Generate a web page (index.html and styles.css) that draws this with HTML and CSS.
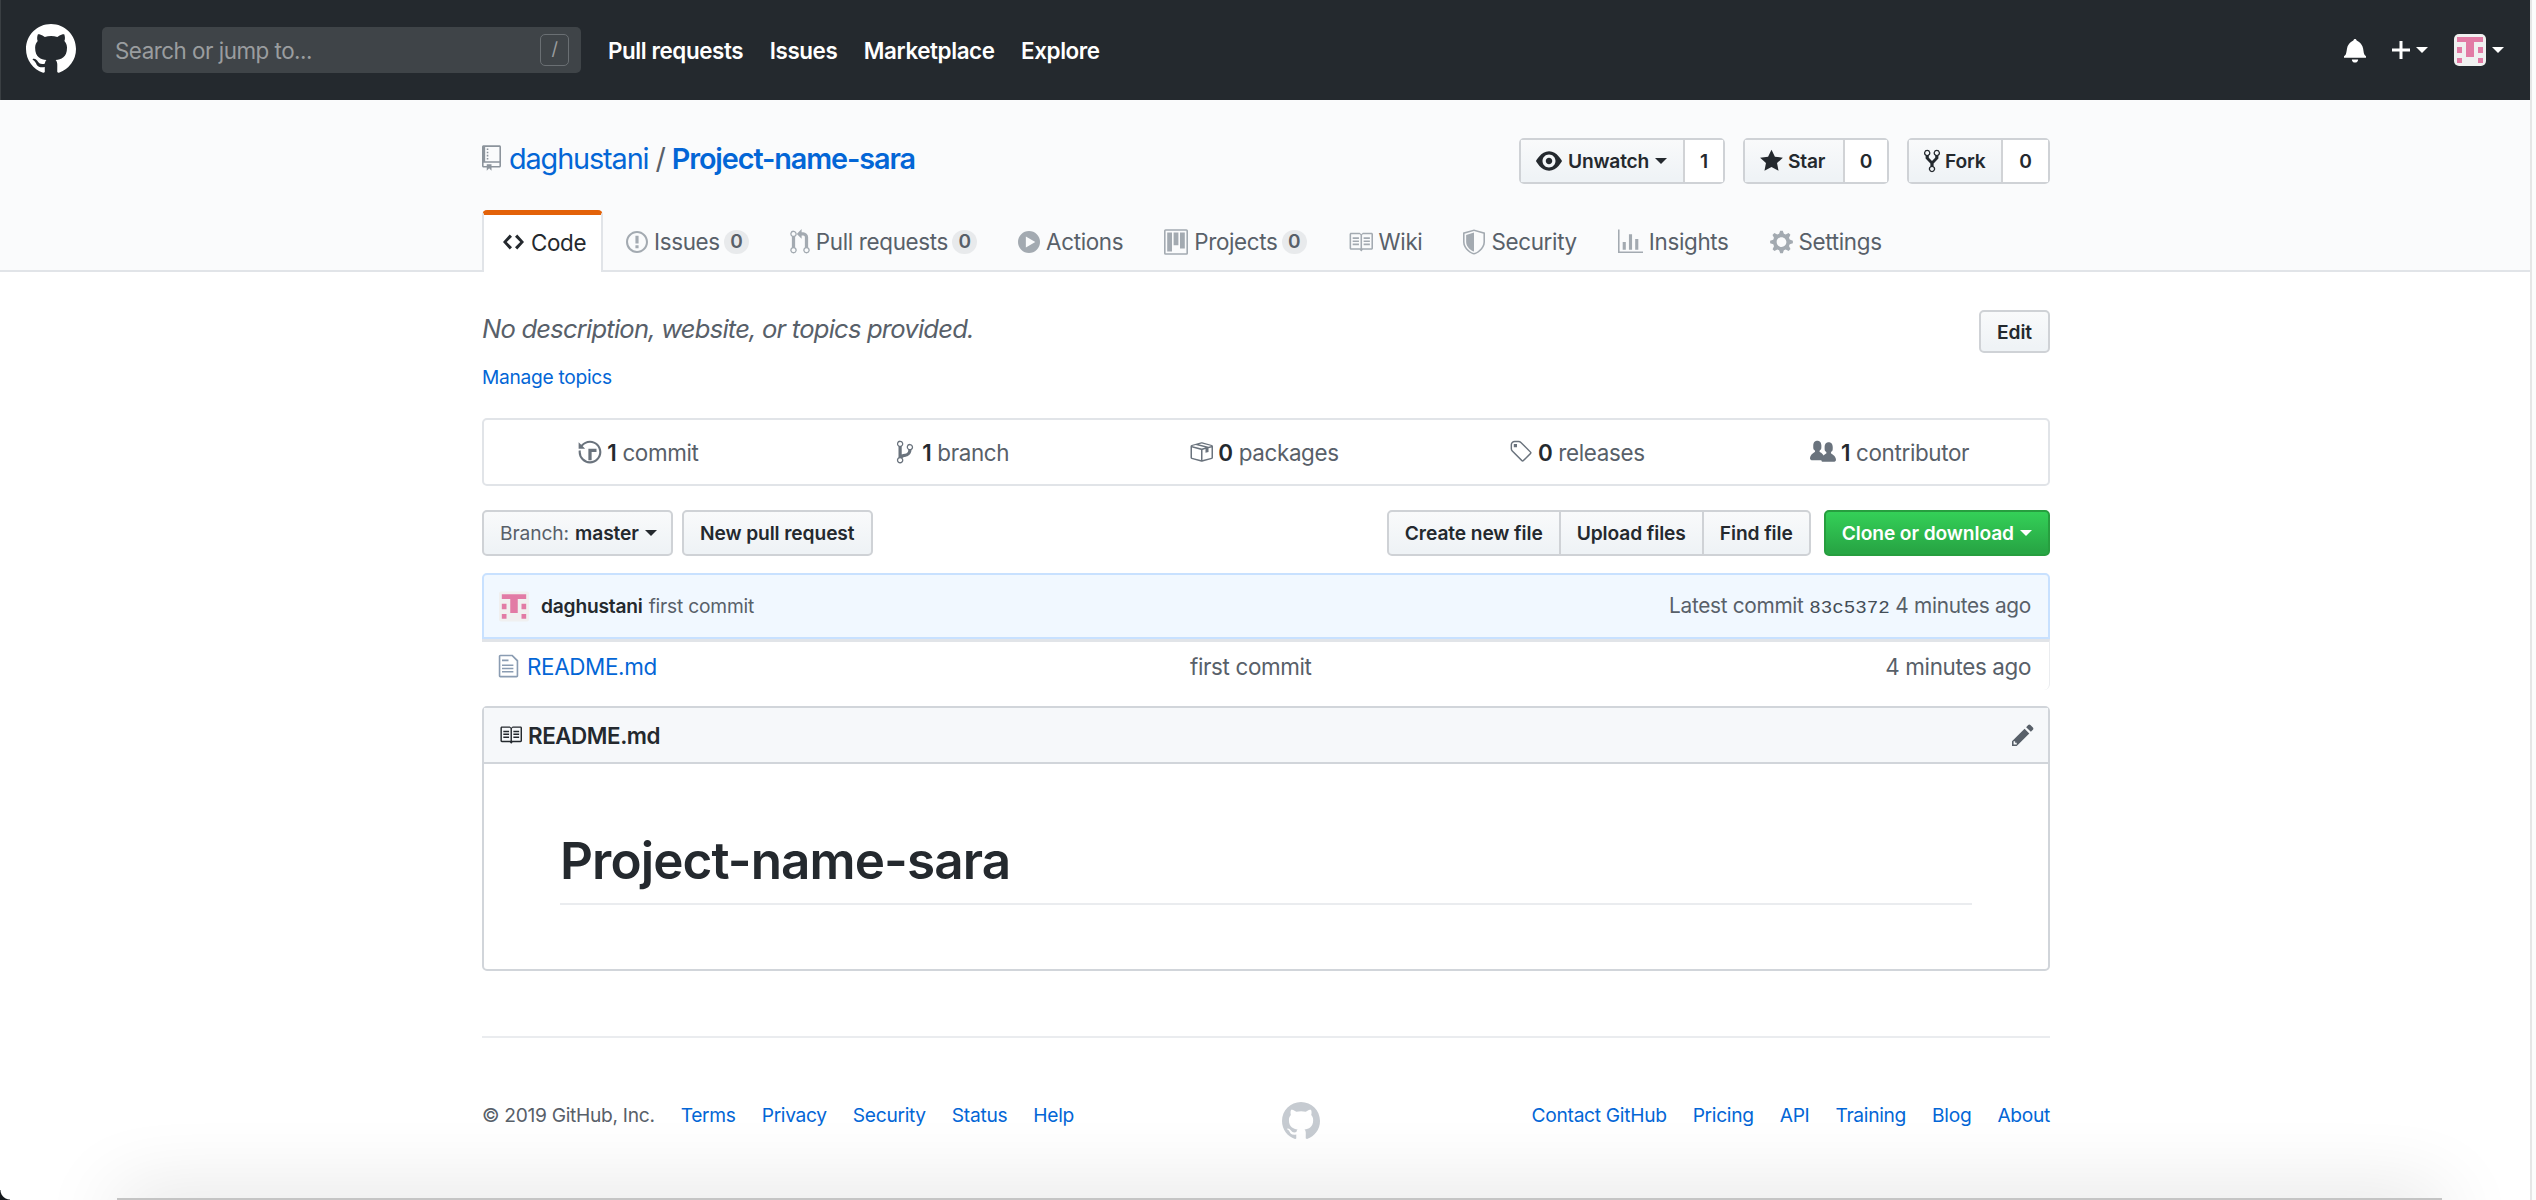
FILE: index.html
```html
<!doctype html>
<html>
<head>
	<meta charset="utf-8">
	<title>daghustani/Project-name-sara</title>
	<link rel="stylesheet" href="styles.css">
</head>
<body>
	<svg class="defs" width="0" height="0">
		<symbol id="mark" viewBox="0 0 16 16"><path fill-rule="evenodd" d="M8 0C3.58 0 0 3.58 0 8c0 3.54 2.29 6.53 5.47 7.59.4.07.55-.17.55-.38 0-.19-.01-.82-.01-1.49-2.01.37-2.53-.49-2.69-.94-.09-.23-.48-.94-.82-1.13-.28-.15-.68-.52-.01-.53.63-.01 1.08.58 1.23.82.72 1.21 1.87.87 2.33.66.07-.52.28-.87.51-1.07-1.78-.2-3.64-.89-3.64-3.95 0-.87.31-1.59.82-2.15-.08-.2-.36-1.02.08-2.12 0 0 .67-.21 2.2.82.64-.18 1.32-.27 2-.27.68 0 1.36.09 2 .27 1.53-1.04 2.2-.82 2.2-.82.44 1.1.16 1.92.08 2.12.51.56.82 1.27.82 2.15 0 3.07-1.87 3.75-3.65 3.95.29.25.54.73.54 1.48 0 1.07-.01 1.93-.01 2.2 0 .21.15.46.55.38A8.013 8.013 0 0 0 16 8c0-4.42-3.58-8-8-8z"/></symbol>
		<symbol id="avatar" viewBox="0 0 32 32"><rect width="32" height="32" fill="#f0f0f0"/><path fill="#e27ba5" d="M3 3h26v5H3zM12 8h8v15h-8zM3 13h5v6H3zM24 13h5v6h-5zM3 24h5v5H3zM24 24h5v5h-5z"/></symbol>
	</svg>

	<header class="topbar">
		<svg class="logo"><use href="#mark"/></svg>
		<div class="search">
			<span>Search or jump to...</span>
			<span class="slash">/</span>
		</div>
		<nav class="topnav">
			<a>Pull requests</a>
			<a>Issues</a>
			<a>Marketplace</a>
			<a>Explore</a>
		</nav>
		<div class="topright">
			<svg class="bell" viewBox="0 0 14 16"><path fill="#fff" d="M14 12v1H0v-1l.73-.58c.77-.77.81-2.55 1.19-4.420C2.690 3.230 6 2 6 2c0-.55.450-1 1-1s1 .450 1 1c0 0 3.390 1.230 4.160 5 .380 1.880.420 3.660 1.190 4.420L14 12zm-7 4c1.110 0 2-.890 2-2H5c0 1.110.890 2 2 2z"/></svg>
			<svg class="plus" viewBox="0 0 12 16"><path fill="#fff" d="M12 9H7v5H5V9H0V7h5V2h2v5h5v2z"/></svg>
			<i class="caret light"></i>
			<svg class="top-avatar"><use href="#avatar"/></svg>
			<i class="caret light"></i>
		</div>
	</header>

	<section class="repohead">
		<div class="wrap">
			<div class="title-row">
				<h1 class="repo-title">
					<svg class="repo-icon" viewBox="0 0 12 16"><path fill="#8c949c" fill-rule="evenodd" d="M4 9H3V8h1v1zm0-3H3v1h1V6zm0-2H3v1h1V4zm0-2H3v1h1V2zm8-1v12c0 .550-.450 1-1 1H6v2l-1.500-1.500L3 16v-2H1c-.550 0-1-.450-1-1V1c0-.550.450-1 1-1h10c.550 0 1 .450 1 1zm-1 10H1v2h2v-1h3v1h5v-2zm0-10H2v9h9V1z"/></svg>
					<a>daghustani</a>
					<span class="sep">/</span>
					<a class="strong">Project-name-sara</a>
				</h1>
				<div class="social">
					<div class="counter-btn w-watch">
						<span class="btn-part"><svg class="ico-eye" viewBox="0 0 16 16"><path fill="#24292e" fill-rule="evenodd" d="M8.060 2C3 2 0 8 0 8s3 6 8.060 6C13 14 16 8 16 8s-3-6-7.940-6zM8 12c-2.200 0-4-1.780-4-4 0-2.200 1.800-4 4-4 2.220 0 4 1.800 4 4 0 2.220-1.780 4-4 4zm2-4c0 1.110-.890 2-2 2-1.110 0-2-.890-2-2 0-1.110.890-2 2-2 1.110 0 2 .890 2 2z"/></svg>Unwatch<i class="caret"></i></span>
						<span class="count">1</span>
					</div>
					<div class="counter-btn w-star">
						<span class="btn-part"><svg class="ico-star" viewBox="0 0 14 16"><path fill="#24292e" fill-rule="evenodd" d="M14 6l-4.900-.640L7 1 4.900 5.360 0 6l3.600 3.260L2.670 14 7 11.670 11.330 14l-.930-4.740L14 6z"/></svg>Star</span>
						<span class="count">0</span>
					</div>
					<div class="counter-btn w-fork">
						<span class="btn-part"><svg class="ico-fork" viewBox="0 0 10 16"><path fill="#24292e" fill-rule="evenodd" d="M8 1a1.993 1.993 0 0 0-1 3.720V6L5 8 3 6V4.720A1.993 1.993 0 0 0 2 1a1.993 1.993 0 0 0-1 3.720V6.500l3 3v1.780A1.993 1.993 0 0 0 5 15a1.993 1.993 0 0 0 1-3.720V9.500l3-3V4.720A1.993 1.993 0 0 0 8 1zM2 4.200C1.340 4.200.800 3.650.800 3c0-.650.550-1.200 1.200-1.200.650 0 1.200.550 1.200 1.200 0 .650-.550 1.200-1.200 1.200zm3 10c-.660 0-1.200-.550-1.200-1.200 0-.650.550-1.200 1.200-1.200.650 0 1.200.550 1.200 1.200 0 .650-.550 1.200-1.200 1.200zm3-10c-.660 0-1.200-.550-1.200-1.200 0-.650.550-1.200 1.200-1.200.650 0 1.200.550 1.200 1.200 0 .650-.550 1.200-1.200 1.200z"/></svg>Fork</span>
						<span class="count">0</span>
					</div>
				</div>
			</div>
			<nav class="tabs">
				<a class="tab selected"><svg class="ico-code" viewBox="0 0 14 16"><path fill="#24292e" fill-rule="evenodd" d="M9.500 3L8 4.500 11.500 8 8 11.500 9.500 13 14 8 9.500 3zm-5 0L0 8l4.500 5L6 11.500 2.500 8 6 4.500 4.500 3z"/></svg>Code</a>
				<a class="tab"><svg class="tab-ico" viewBox="0 0 14 16"><path fill="#a3aab1" fill-rule="evenodd" d="M7 2.300c3.140 0 5.700 2.560 5.700 5.700s-2.560 5.700-5.700 5.700A5.710 5.710 0 0 1 1.300 8c0-3.140 2.560-5.700 5.700-5.700zM7 1C3.140 1 0 4.140 0 8s3.140 7 7 7 7-3.140 7-7-3.140-7-7-7zm1 3H6v5h2V4zm0 6H6v2h2v-2z"/></svg>Issues<span class="badge">0</span></a>
				<a class="tab"><svg class="tab-ico i-pr" viewBox="0 0 12 16"><path fill="#a3aab1" fill-rule="evenodd" d="M11 11.280V5c-.030-.780-.340-1.470-.940-2.060C9.460 2.350 8.780 2.030 8 2H7V0L4 3l3 3V4h1c.270.020.480.110.690.310.210.200.300.420.310.690v6.280A1.993 1.993 0 0 0 10 15a1.993 1.993 0 0 0 1-3.720zm-1 2.920c-.660 0-1.200-.550-1.200-1.200 0-.650.550-1.200 1.200-1.200.650 0 1.200.550 1.200 1.200 0 .650-.550 1.200-1.200 1.200zM4 3c0-1.110-.890-2-2-2a1.993 1.993 0 0 0-1 3.720v6.560A1.993 1.993 0 0 0 2 15a1.993 1.993 0 0 0 1-3.720V4.720c.590-.340 1-.980 1-1.720zm-.800 10c0 .660-.550 1.200-1.200 1.200-.650 0-1.200-.550-1.200-1.200 0-.650.550-1.200 1.200-1.200.650 0 1.200.550 1.200 1.200zM2 4.200C1.340 4.200.800 3.650.800 3c0-.650.550-1.200 1.200-1.200.650 0 1.200.550 1.200 1.200 0 .650-.550 1.200-1.200 1.200z"/></svg>Pull requests<span class="badge">0</span></a>
				<a class="tab"><svg class="tab-ico" viewBox="0 0 14 16"><path fill="#a3aab1" fill-rule="evenodd" d="M7 1a7 7 0 1 0 0 14A7 7 0 0 0 7 1zM5 11.500v-7L11 8l-6 3.500z"/></svg>Actions</a>
				<a class="tab"><svg class="tab-ico i-proj" viewBox="0 0 15 16"><path fill="#a3aab1" fill-rule="evenodd" d="M10 12h3V2h-3v10zm-4-2h3V2H6v8zm-4 4h3V2H2v12zm-1 1h13V1H1v14zM14 0H1a1 1 0 0 0-1 1v14a1 1 0 0 0 1 1h13a1 1 0 0 0 1-1V1a1 1 0 0 0-1-1z"/></svg>Projects<span class="badge">0</span></a>
				<a class="tab"><svg class="tab-ico i-wide" viewBox="0 0 16 16"><path fill="#a3aab1" fill-rule="evenodd" d="M3 5h4v1H3V5zm0 3h4V7H3v1zm0 2h4V9H3v1zm11-5h-4v1h4V5zm0 2h-4v1h4V7zm0 2h-4v1h4V9zm2-6v9c0 .550-.450 1-1 1H9.500l-1 1-1-1H2c-.550 0-1-.450-1-1V3c0-.550.450-1 1-1h5.500l1 1 1-1H15c.550 0 1 .450 1 1zM8 3.500L7.500 3H2v9h6V3.500zm7-.500H9.500l-.500.500V12h6V3z"/></svg>Wiki</a>
				<a class="tab"><svg class="tab-ico" viewBox="0 0 14 16"><path fill="#a3aab1" fill-rule="evenodd" d="M0 2l7-2 7 2v6.020C14 12.690 8.530 16 7 16c-1.530 0-7-3.310-7-7.980V2zm1 .750L7 1l6 1.750v5.270C13 12 8.310 15 7 15c-1.310 0-6-3-6-6.980V2.750zM7 2L2 3.500v4.500c0 3.500 3.800 5.900 5 6V2z"/></svg>Security</a>
				<a class="tab"><svg class="tab-ico i-wide" viewBox="0 0 16 16"><path fill="#a3aab1" fill-rule="evenodd" d="M16 14v1H0V0h1v14h15zM5 13H3V8h2v5zm4 0H7V3h2v10zm4 0h-2V6h2v7z"/></svg>Insights</a>
				<a class="tab"><svg class="tab-ico i-set" viewBox="0 0 14 16"><path fill="#a3aab1" fill-rule="evenodd" d="M14 8.770v-1.600l-1.940-.640-.450-1.090.880-1.840-1.130-1.130-1.810.910-1.090-.450-.690-1.920h-1.600l-.630 1.940-1.110.450-1.840-.880-1.130 1.130.910 1.810-.450 1.090L0 7.230v1.590l1.940.640.450 1.090-.880 1.840 1.130 1.130 1.810-.910 1.090.450.690 1.920h1.590l.630-1.940 1.110-.450 1.840.880 1.130-1.130-.920-1.810.470-1.090L14 8.750v.020zM7 11c-1.660 0-3-1.340-3-3s1.340-3 3-3 3 1.340 3 3-1.340 3-3 3z"/></svg>Settings</a>
			</nav>
		</div>
	</section>

	<main class="wrap">
		<div class="desc-row">
			<div>
				<p class="desc">No description, website, or topics provided.</p>
				<a class="manage">Manage topics</a>
			</div>
			<span class="btn edit">Edit</span>
		</div>

		<ul class="summary">
			<li><svg class="sum-ico" viewBox="0 0 14 16"><path fill="#6a737d" fill-rule="evenodd" d="M8 13H6V6h5v2H8v5zM7 1C4.810 1 2.870 2.020 1.590 3.590L0 2v4h4L2.500 4.500C3.510 3.100 5.140 2.300 7 2.300c3.140 0 5.700 2.560 5.700 5.700s-2.560 5.700-5.700 5.700A5.710 5.710 0 0 1 1.300 8c0-.340.030-.670.090-1H.080C.030 7.330 0 7.660 0 8c0 3.860 3.140 7 7 7s7-3.140 7-7-3.140-7-7-7z"/></svg><b>1</b> commit</li>
			<li><svg class="sum-ico" viewBox="0 0 10 16"><path fill="#6a737d" fill-rule="evenodd" d="M10 5c0-1.110-.890-2-2-2a1.993 1.993 0 0 0-1 3.720v.300c-.020.520-.230.980-.630 1.380-.400.400-.860.610-1.380.630-.830.020-1.480.160-2 .450V4.720A1.993 1.993 0 0 0 2 1a1.993 1.993 0 0 0-1 3.720v6.560c-.590.350-1 .990-1 1.720 0 1.110.890 2 2 2 1.110 0 2-.890 2-2 0-.530-.200-1-.530-1.360.090-.060.480-.410.590-.470.250-.110.560-.170.940-.170 1.050-.050 1.950-.450 2.750-1.250S8.950 7.770 9 6.730h-.020C9.590 6.370 10 5.730 10 5zM2 1.800c.660 0 1.200.550 1.200 1.200 0 .650-.550 1.200-1.200 1.200C1.350 4.200.800 3.650.800 3c0-.650.550-1.200 1.200-1.200zm0 12.410c-.660 0-1.200-.550-1.200-1.200 0-.650.550-1.200 1.200-1.200.650 0 1.200.550 1.200 1.200 0 .650-.550 1.200-1.200 1.200zm6-8c-.660 0-1.200-.550-1.200-1.200 0-.650.550-1.200 1.200-1.200.650 0 1.200.550 1.200 1.200 0 .650-.550 1.200-1.200 1.200z"/></svg><b>1</b> branch</li>
			<li><svg class="sum-ico" viewBox="0 0 16 16"><path fill="#6a737d" fill-rule="evenodd" d="M1 4.270v7.470c0 .450.300.840.750.970l6.500 1.730c.160.050.340.050.500 0l6.500-1.730c.450-.130.750-.520.750-.970V4.270c0-.450-.300-.840-.750-.970l-6.500-1.740a1.400 1.400 0 0 0-.500 0L1.750 3.300c-.450.130-.750.520-.750.970zm7 9.090l-6-1.590V5l6 1.610v6.750zM2 4l2.500-.670L11 5.060l-2.500.670L2 4zm13 7.770l-6 1.590V6.610l2-.550V8.500l2-.530V5.530L15 5v6.770zm-2-7.240L6.500 2.800l2-.530L15 4l-2 .530z"/></svg><b>0</b> packages</li>
			<li><svg class="sum-ico" viewBox="0 0 15 16"><path fill="#6a737d" fill-rule="evenodd" d="M7.730 1.730C7.260 1.260 6.620 1 5.960 1H3.500C2.120 1 1 2.120 1 3.500v2.470c0 .660.270 1.300.730 1.770l6.060 6.060c.390.390 1.020.390 1.410 0l4.590-4.590a.996.996 0 0 0 0-1.410L7.730 1.730zM2.380 7.090c-.310-.300-.470-.700-.470-1.130V3.500c0-.880.720-1.600 1.600-1.600h2.470c.420 0 .830.160 1.130.470l6.140 6.130-4.730 4.730-6.140-6.140zM3.010 3h2v2H3V3h.010z"/></svg><b>0</b> releases</li>
			<li><svg class="sum-ico wide" viewBox="0 0 16 16"><path fill="#6a737d" fill-rule="evenodd" d="M16 12.999c0 .439-.450 1-1 1H7.995c-.539 0-.994-.447-.995-.999H1c-.550 0-1-.561-1-1 0-2.634 3-4 3-4s.229-.409 0-1c-.841-.621-1.058-.590-1-3 .058-2.419 1.367-3 2.500-3s2.442.580 2.500 3c.058 2.410-.159 2.379-1 3-.229.590 0 1 0 1s1.549.711 2.420 2.088C9.196 9.369 10 8.999 10 8.999s.229-.409 0-1c-.841-.620-1.058-.590-1-3 .058-2.419 1.367-3 2.500-3s2.437.581 2.495 3c.059 2.410-.158 2.380-1 3-.229.590 0 1 0 1s3.005 1.366 3.005 4z"/></svg><b>1</b> contributor</li>
		</ul>

		<div class="file-nav">
			<div class="left">
				<span class="btn">Branch: <b>master</b><i class="caret"></i></span>
				<span class="btn">New pull request</span>
			</div>
			<div class="right">
				<div class="group">
					<span class="btn">Create new file</span>
					<span class="btn">Upload files</span>
					<span class="btn">Find file</span>
				</div>
				<span class="btn green">Clone or download<i class="caret light"></i></span>
			</div>
		</div>

		<div class="commit-bar">
			<svg class="commit-avatar"><use href="#avatar"/></svg>
			<a class="author">daghustani</a>
			<span class="msg">first commit</span>
			<span class="latest">Latest commit <code>83c5372</code> 4 minutes ago</span>
		</div>
		<div class="file-row">
			<div class="file-name">
				<svg class="file-ico" viewBox="0 0 12 16"><path fill="#8a9cb2" fill-rule="evenodd" d="M6 5H2V4h4v1zM2 8h7V7H2v1zm0 2h7V9H2v1zm0 2h7v-1H2v1zm10-7.500V14c0 .550-.450 1-1 1H1c-.550 0-1-.450-1-1V2c0-.550.450-1 1-1h7.500L12 4.500zM11 5L8 2H1v12h10V5z"/></svg>
				<a>README.md</a>
			</div>
			<span class="file-msg">first commit</span>
			<span class="file-age">4 minutes ago</span>
		</div>

		<article class="readme">
			<div class="readme-head">
				<h3><svg class="book" viewBox="0 0 16 16"><path fill="#24292e" fill-rule="evenodd" d="M3 5h4v1H3V5zm0 3h4V7H3v1zm0 2h4V9H3v1zm11-5h-4v1h4V5zm0 2h-4v1h4V7zm0 2h-4v1h4V9zm2-6v9c0 .550-.450 1-1 1H9.500l-1 1-1-1H2c-.550 0-1-.450-1-1V3c0-.550.450-1 1-1h5.500l1 1 1-1H15c.550 0 1 .450 1 1zM8 3.500L7.500 3H2v9h6V3.500zm7-.500H9.500l-.500.500V12h6V3z"/></svg>README.md</h3>
				<svg class="pencil" viewBox="0 0 14 16"><path fill="#586069" fill-rule="evenodd" d="M0 12v3h3l8-8-3-3-8 8zm3 2H1v-2h1v1h1v1zm10.300-9.300L12 6 9 3l1.300-1.300a.996.996 0 0 1 1.410 0l1.590 1.590c.390.390.390 1.020 0 1.410z"/></svg>
			</div>
			<div class="readme-body">
				<h1>Project-name-sara</h1>
			</div>
		</article>

		<footer class="foot">
			<div class="foot-left">
				<span class="copy">© 2019 GitHub, Inc.</span>
				<a>Terms</a><a>Privacy</a><a>Security</a><a>Status</a><a>Help</a>
			</div>
			<svg class="foot-mark"><use href="#mark"/></svg>
			<div class="foot-right">
				<a>Contact GitHub</a><a>Pricing</a><a>API</a><a>Training</a><a>Blog</a><a>About</a>
			</div>
		</footer>
	</main>

	<div class="win-shadow"></div>
	<div class="win-edge"></div>
	<div class="win-corner"></div>
</body>
</html>
```

FILE: styles.css
```css
* {
	box-sizing: border-box;
}
html, body {
	margin: 0;
	height: 1200px;
	overflow: hidden;
}
body {
	position: relative;
	background: #fff;
	color: #24292e;
	font-family: Inter, "Liberation Sans", sans-serif;
	font-size: 22.4px;
	letter-spacing: -0.3px;
}
a {
	color: #0366d6;
}
ul, p, h1, h3 {
	margin: 0;
	padding: 0;
}
svg {
	flex: none;
	display: block;
}
.defs {
	position: absolute;
}
.wrap {
	width: 1568px;
	margin-left: 482px;
}

/* top bar */
.topbar {
	height: 100px;
	background: #24292e;
	border-left: 1px solid #3a3f43;
	display: flex;
	align-items: center;
	padding: 0 25px;
}
.logo {
	width: 50px;
	height: 50px;
	margin-top: -3px;
	fill: #fff;
}
.search {
	width: 479px;
	height: 46px;
	margin-left: 26px;
	background: #3f4448;
	border-radius: 5px;
	color: #9a9d9f;
	letter-spacing: -0.5px;
	display: flex;
	align-items: center;
	justify-content: space-between;
	padding: 0 12px 0 13px;
}
.slash {
	width: 29px;
	height: 32px;
	border: 1.5px solid #6a6f73;
	border-radius: 5px;
	font-size: 18px;
	text-align: center;
	line-height: 28px;
}
.topnav {
	display: flex;
	gap: 26.5px;
	margin-left: 27px;
	font-weight: 600;
	letter-spacing: -0.4px;
}
.topnav a {
	color: #fff;
}
.topright {
	margin-left: auto;
	margin-right: 7px;
	display: flex;
	align-items: center;
}
.bell {
	width: 22px;
	height: 26px;
	margin-right: 26px;
}
.plus {
	width: 18px;
	height: 24px;
}
.top-avatar {
	width: 32px;
	height: 32px;
	margin-left: 26px;
	margin-right: 0;
	border-radius: 5px;
}
.caret {
	display: inline-block;
	width: 0;
	height: 0;
	margin-left: 6px;
	border-style: solid;
	border-width: 6px 6px 0;
	border-color: #24292e transparent transparent;
}
.caret.light {
	border-top-color: #fff;
}

/* repo head */
.repohead {
	height: 172px;
	background: #fafbfc;
	border-bottom: 2px solid #e1e4e8;
}
.title-row {
	height: 110px;
	display: flex;
	justify-content: space-between;
	padding-top: 38px;
}
.repo-title {
	display: flex;
	align-items: center;
	height: 40px;
	font-size: 28.8px;
	font-weight: 400;
	letter-spacing: -1.1px;
}
.repo-icon {
	width: 19px;
	height: 26px;
	margin-right: 8px;
}
.sep {
	margin: 0 7px;
	color: #586069;
}
.strong {
	font-weight: 600;
}
.social {
	display: flex;
	gap: 18px;
}
.counter-btn {
	height: 46px;
	display: flex;
	border: 2px solid #cfd2d6;
	border-radius: 5px;
	font-size: 19.2px;
	font-weight: 600;
	letter-spacing: -0.2px;
}
.btn-part {
	display: flex;
	align-items: center;
	padding-left: 15px;
	background: linear-gradient(#f9fafb, #eff3f6 90%);
	border-right: 2px solid #d1d3d6;
}
.count {
	flex: 1;
	background: #fff;
	text-align: center;
	line-height: 42px;
	font-weight: 600;
}
.w-watch { width: 206px; }
.w-watch .btn-part { width: 164px; }
.w-star { width: 146px; }
.w-star .btn-part { width: 100px; }
.w-fork { width: 143px; }
.w-fork .btn-part { width: 94px; }
.ico-eye { width: 26px; height: 26px; margin-right: 6px; }
.ico-star { width: 23px; height: 26px; margin-right: 5px; }
.ico-fork { width: 16px; height: 26px; margin-right: 5px; }

/* tabs */
.tabs {
	display: flex;
	height: 62px;
	letter-spacing: -0.33px;
}
.tab {
	display: flex;
	align-items: center;
	height: 62px;
	padding: 1px 18px 0 23px;
	color: #586069;
}
.tab.selected {
	width: 121px;
	color: #24292e;
	padding: 0 0 3px 19px;
	background: #fff;
	border-top: 5px solid #e36209;
	border-left: 2px solid #e1e4e8;
	border-right: 2px solid #e1e4e8;
	border-radius: 5px 5px 0 0;
	margin-bottom: -2px;
	height: 62px;
}
.ico-code {
	width: 21px;
	height: 24px;
	margin-right: 7px;
}
.tab-ico {
	height: 26px;
	width: 22px;
	margin-right: 6px;
}
.tab-ico.i-pr { width: 20px; }
.tab-ico.i-proj { width: 24px; }
.tab-ico.i-wide { width: 25px; }
.tab-ico.i-set { width: 23px; }
.badge {
	width: 25px;
	height: 24px;
	margin-left: 4px;
	border-radius: 12px;
	background: #e8eaec;
	font-size: 19px;
	font-weight: 600;
	color: #586069;
	text-align: center;
	line-height: 24px;
}

/* description */
.desc-row {
	display: flex;
	justify-content: space-between;
	padding-top: 38px;
	height: 146px;
}
.desc {
	font-size: 25.6px;
	font-style: italic;
	color: #586069;
	line-height: 38px;
	letter-spacing: -0.8px;
}
.manage {
	display: block;
	margin-top: 17px;
	font-size: 19.2px;
}
.btn {
	display: inline-flex;
	align-items: center;
	height: 46px;
	padding: 0 16px;
	border: 2px solid #cfd2d6;
	border-radius: 5px;
	background: linear-gradient(#f9fafb, #eff3f6 90%);
	font-size: 19.2px;
	font-weight: 600;
	letter-spacing: -0.1px;
	white-space: nowrap;
}
.edit {
	height: 43px;
}

/* numbers */
.summary {
	list-style: none;
	height: 68px;
	display: flex;
	border: 2px solid #e1e4e8;
	border-radius: 5px;
	color: #586069;
	letter-spacing: -0.35px;
}
.summary li {
	flex: 1;
	display: flex;
	align-items: center;
	justify-content: center;
	padding-right: 4px;
	white-space: pre;
}
.summary b {
	color: #24292e;
	font-weight: 600;
}
.sum-ico {
	width: 24px;
	height: 26px;
	margin-right: 5px;
}
.sum-ico.wide {
	width: 26px;
}

/* file nav */
.file-nav {
	display: flex;
	justify-content: space-between;
	margin-top: 24px;
}
.left, .right {
	display: flex;
	gap: 9px;
}
.right {
	gap: 13px;
}
.left .btn b {
	font-weight: 600;
	margin-left: 6px;
	color: #24292e;
}
.left .btn:first-child {
	color: #586069;
	font-weight: 400;
	width: 191px;
}
.group {
	display: flex;
}
.group .btn {
	border-radius: 0;
	margin-left: -2px;
}
.group .btn:first-child {
	border-radius: 5px 0 0 5px;
	margin-left: 0;
}
.group .btn:last-child {
	border-radius: 0 5px 5px 0;
}
.green {
	color: #fff;
	background: linear-gradient(#34d058, #28a745 90%);
	border-color: #279e3f;
}

/* commit bar */
.commit-bar {
	height: 66px;
	margin-top: 17px;
	display: flex;
	align-items: center;
	padding: 0 17px 0 15px;
	background: #f1f8ff;
	border: 2px solid #c8e1ff;
	border-radius: 5px 5px 0 0;
	font-size: 20.8px;
	color: #586069;
}
.commit-avatar {
	width: 30px;
	height: 31px;
	margin-right: 12px;
	border-radius: 3px;
}
.author {
	color: #24292e;
	font-size: 19.2px;
	font-weight: 600;
	letter-spacing: -0.2px;
}
.msg {
	margin-left: 6px;
	font-size: 19.2px;
	letter-spacing: -0.2px;
}
.latest {
	margin-left: auto;
}
code {
	font-family: "Liberation Mono", monospace;
	font-size: 19.2px;
	letter-spacing: 0;
	color: #444d56;
}
.file-row {
	height: 51px;
	display: flex;
	align-items: center;
	padding: 0 18px 0 16px;
	border-top: 3px solid #e1e4e8;
	border-right: 1px solid #eaecef;
	border-radius: 0 0 6px 0;
	color: #586069;
	letter-spacing: -0.35px;
}
.file-name {
	width: 692px;
	display: flex;
	align-items: center;
}
.file-ico {
	width: 21px;
	height: 26px;
	margin-right: 8px;
}
.file-age {
	margin-left: auto;
}

/* readme */
.readme {
	height: 265px;
	margin-top: 16px;
	border: 2px solid #d1d5da;
	border-radius: 5px;
}
.readme-head {
	height: 56px;
	background: #f6f8fa;
	border-bottom: 2px solid #d1d5da;
	display: flex;
	align-items: center;
	justify-content: space-between;
	padding: 0 14px 0 15px;
}
.readme-head h3 {
	display: flex;
	align-items: center;
	font-size: 22.4px;
	font-weight: 600;
	letter-spacing: -0.45px;
}
.book {
	width: 23px;
	height: 24px;
	margin-right: 6px;
}
.pencil {
	width: 22px;
	height: 26px;
}
.readme-body {
	padding: 66px 76px 0;
}
.readme-body h1 {
	height: 75px;
	font-size: 51.2px;
	font-weight: 600;
	line-height: 60px;
	letter-spacing: -0.9px;
	border-bottom: 2px solid #eaecef;
}

/* footer */
.foot {
	position: relative;
	margin-top: 65px;
	height: 120px;
	border-top: 2px solid #eaecef;
	display: flex;
	justify-content: space-between;
	padding-top: 65px;
	font-size: 19.2px;
}
.foot-left, .foot-right {
	display: flex;
	gap: 26px;
}
.copy {
	color: #586069;
}
.foot-mark {
	position: absolute;
	left: 800px;
	top: 64px;
	width: 38px;
	height: 38px;
	fill: #c6cbd1;
}

/* desktop window around the page */
.win-shadow {
	position: absolute;
	left: 117px;
	width: 2325px;
	top: 1198px;
	height: 40px;
	background: #c4c4c4;
	box-shadow: 0 0 80px rgba(0,0,0,.16);
}
.win-edge {
	position: absolute;
	right: 0;
	top: 0;
	bottom: 0;
	width: 6px;
	background: #fcfcfc;
	border-left: 2px solid #e6e6e6;
}
.win-corner {
	position: absolute;
	left: 0;
	bottom: 0;
	width: 10px;
	height: 10px;
	background: radial-gradient(circle at 100% 0, transparent 9px, #14181c 10px);
}
```
